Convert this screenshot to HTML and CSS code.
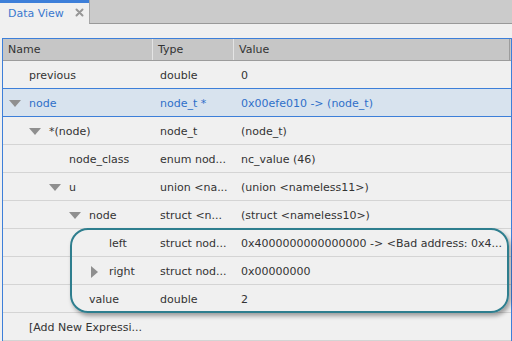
FILE: index.html
```html
<!DOCTYPE html>
<html lang="en">
<head>
    <meta charset="UTF-8">
    <title>Data View</title>
    <link rel="stylesheet" href="styles.css">
</head>
<body>
    <div class="tab-bar">
        <div class="tab">
            <span class="tab-title">Data View</span>
            <svg class="tab-close" width="9" height="9" viewBox="0 0 9 9">
                <path d="M1.5 1.5 L7.5 7.5 M7.5 1.5 L1.5 7.5" stroke="#979797" stroke-width="2" stroke-linecap="round"/>
            </svg>
        </div>
        <div class="tab-rest"></div>
    </div>

    <div class="view">
        <div class="tree">
            <div class="row header">
                <div class="cell">Name</div>
                <div class="cell">Type</div>
                <div class="cell">Value</div>
            </div>

            <div class="row">
                <div class="cell name lvl0"><span class="tw"></span>previous</div>
                <div class="cell">double</div>
                <div class="cell">0</div>
            </div>
            <div class="row selected">
                <div class="cell name lvl0"><span class="tw down"></span>node</div>
                <div class="cell">node_t *</div>
                <div class="cell">0x00efe010 -&gt; (node_t)</div>
            </div>
            <div class="row">
                <div class="cell name lvl1"><span class="tw down"></span>*(node)</div>
                <div class="cell">node_t</div>
                <div class="cell">(node_t)</div>
            </div>
            <div class="row">
                <div class="cell name lvl2"><span class="tw"></span>node_class</div>
                <div class="cell">enum nod...</div>
                <div class="cell">nc_value (46)</div>
            </div>
            <div class="row">
                <div class="cell name lvl2"><span class="tw down"></span>u</div>
                <div class="cell">union &lt;na...</div>
                <div class="cell">(union &lt;nameless11&gt;)</div>
            </div>
            <div class="row">
                <div class="cell name lvl3"><span class="tw down"></span>node</div>
                <div class="cell">struct &lt;n...</div>
                <div class="cell">(struct &lt;nameless10&gt;)</div>
            </div>
            <div class="row">
                <div class="cell name lvl4"><span class="tw"></span>left</div>
                <div class="cell">struct nod...</div>
                <div class="cell">0x4000000000000000 -&gt; &lt;Bad address: 0x4...</div>
            </div>
            <div class="row">
                <div class="cell name lvl4"><span class="tw right"></span>right</div>
                <div class="cell">struct nod...</div>
                <div class="cell">0x00000000</div>
            </div>
            <div class="row">
                <div class="cell name lvl3"><span class="tw"></span>value</div>
                <div class="cell">double</div>
                <div class="cell">2</div>
            </div>
            <div class="row">
                <div class="cell name lvl0"><span class="tw"></span>[Add New Expressi...</div>
                <div class="cell"></div>
                <div class="cell"></div>
            </div>
        </div>

        <!-- callout drawn over the left / right / value rows -->
        <div class="callout"></div>
    </div>
</body>
</html>
```

FILE: styles.css
```css
body {
    margin: 0;
    background-color: #f0f0f0;
    font-family: "DejaVu Sans", Verdana, sans-serif;
    font-size: 11px;
    color: #333;
    overflow: hidden;
}

.tab-bar {
    display: flex;
    height: 24px;
}

.tab {
    width: 89px;
    box-sizing: border-box;
    border-top: 3px solid #3d7fd9;
    background-color: #f0f0f0;
    display: flex;
    align-items: center;
    padding: 0 0 0 8px;
}

.tab-title {
    color: #3a78cf;
    font-size: 11px;
    padding-bottom: 1px;
}

.tab-close {
    margin-left: 11px;
    margin-bottom: 2px;
}

.tab-rest {
    flex: 1;
    background-color: #cbcbcb;
    border-left: 1px solid #a8a8a8;
    border-bottom: 1px solid #999;
}

.view {
    position: relative;
    padding-top: 14px;
}

.tree {
    margin-left: 2px;
    border: 1px solid #3d7fd9;
    border-bottom: none;
}

.row {
    display: grid;
    grid-template-columns: 150px 81px 1fr;
    height: 27px;
    align-items: center;
    border-bottom: 1px solid #d4d4d4;
    white-space: nowrap;
    overflow: hidden;
}

.row.header {
    height: 21px;
    background-color: #c6c6c6;
    border-bottom: 1px solid #9c9c9c;
    align-items: stretch;
}

.row.header .cell {
    display: flex;
    align-items: center;
    padding-top: 0;
    padding-left: 5px;
    border-right: 1px solid #e4e4e4;
}

.row.header .cell:last-child {
    margin-right: 1px;
    border-right: 1px solid #9c9c9c;
}

.cell {
    padding-left: 7px;
    padding-top: 2px;
    overflow: hidden;
}

.row.selected {
    background-color: #d8e3ee;
    color: #2f6fc9;
    border-bottom: 1px solid #3d7fd9;
    box-shadow: 0 -1px 0 #3d7fd9;
}

.name {
    display: flex;
    align-items: center;
    padding-left: 5px;
}

.lvl1 { padding-left: 25px; }
.lvl2 { padding-left: 45px; }
.lvl3 { padding-left: 65px; }
.lvl4 { padding-left: 85px; }

.tw {
    width: 21px;
    height: 12px;
    flex: none;
    position: relative;
}

.tw.down::before {
    content: "";
    position: absolute;
    left: 1px;
    top: 2px;
    border-left: 6px solid transparent;
    border-right: 6px solid transparent;
    border-top: 7px solid #8f8f8f;
}

.tw.right::before {
    content: "";
    position: absolute;
    left: 3px;
    top: 0;
    border-top: 6px solid transparent;
    border-bottom: 6px solid transparent;
    border-left: 7px solid #8f8f8f;
}

.callout {
    position: absolute;
    left: 70px;
    top: 204px;
    width: 439px;
    height: 85px;
    box-sizing: border-box;
    border: 2px solid #2e7e8e;
    border-radius: 18px;
    box-shadow: 2px 3px 4px rgba(0, 0, 0, 0.35);
    pointer-events: none;
}
```
